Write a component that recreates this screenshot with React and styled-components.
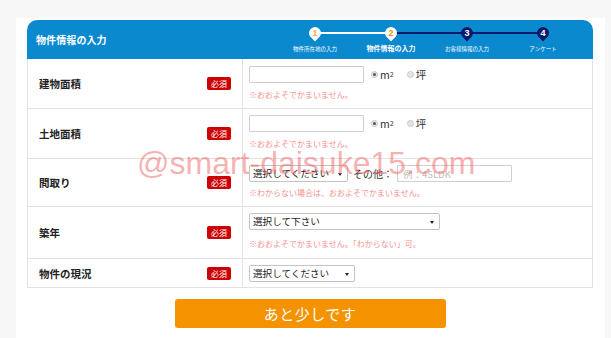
import React from "react";
import styled, { createGlobalStyle } from "styled-components";

const Global = createGlobalStyle`
  html, body { margin: 0; padding: 0; background: #f7f7f7; }
  body { font-family: "Noto Sans CJK JP", "Noto Sans", sans-serif; color: #222; }
  * { box-sizing: border-box; }
`;

const Page = styled.div`
  position: relative;
  width: 611px;
  height: 338px;
  padding: 18px 0 0 16px;
  overflow: hidden;
`;

const Panel = styled.div`
  width: 589px;
  background: #fff;
  padding: 2px 12px 10px 11px;
`;

const Header = styled.div`
  height: 39px;
  background: #0a89cf;
  border-radius: 10px 10px 0 0;
  display: flex;
  align-items: stretch;
  padding-left: 9px;
`;

const Title = styled.div`
  display: flex;
  align-items: center;
  color: #fff;
  font-weight: 700;
  font-size: 10px;
  letter-spacing: 0.1px;
`;

const Steps = styled.div`
  margin-left: auto;
  margin-right: 12px;
  display: grid;
  grid-template-columns: repeat(4, 76px);
  padding-top: 4px;
`;

const Step = styled.div`
  display: flex;
  flex-direction: column;
  align-items: center;
`;

const StepLabel = styled.div`
  color: #fff;
  font-size: ${(p) => (p.$active ? "7px" : "5.5px")};
  font-weight: ${(p) => (p.$active ? 700 : 400)};
  line-height: 9px;
  margin-top: ${(p) => (p.$active ? "0px" : "1px")};
  white-space: nowrap;
`;

const NAVY = "#0b1a6b";

function Marker({ n, left, right, done }) {
  const fill = done ? "#fff" : NAVY;
  const text = done ? (n === 1 ? "#f7a55a" : "#f39000") : "#fff";
  return (
    <svg width="76" height="20" viewBox="0 0 76 20">
      {left && <line x1="0" y1="9" x2="38" y2="9" stroke={left} strokeWidth="2" />}
      {right && <line x1="38" y1="9" x2="76" y2="9" stroke={right} strokeWidth="2" />}
      <path d="M38 17.5 L34.2 13.4 A5.8 5.8 0 1 1 41.8 13.4 Z" fill={fill} />
      <circle cx="38" cy="9" r="5.8" fill={fill} />
      <text
        x="38"
        y="12.3"
        textAnchor="middle"
        fontSize="9"
        fontWeight="700"
        fontFamily="Liberation Sans, Arial, sans-serif"
        fill={text}
      >
        {n}
      </text>
    </svg>
  );
}

const Table = styled.div`
  border: 1px solid #e2e2e2;
  border-top: none;
`;

const Row = styled.div`
  display: grid;
  grid-template-columns: 215px 1fr;
  border-bottom: 1px solid #e2e2e2;
  &:last-child { border-bottom: none; }
`;

const LabelCell = styled.div`
  display: flex;
  align-items: center;
  padding: 0 11px;
  border-right: 1px solid #e2e2e2;
`;

const Label = styled.div`
  flex: 1;
  font-size: 10.5px;
  font-weight: 700;
  color: #222;
`;

const Badge = styled.span`
  background: #cc0000;
  color: #fff;
  font-size: 8px;
  line-height: 13px;
  height: 13px;
  padding: 0 4px;
  border-radius: 2px;
`;

const FieldCell = styled.div`
  padding: ${(p) => p.$pad || "6px 6px 7px"};
  display: flex;
  flex-direction: column;
`;

const Line = styled.div`
  display: flex;
  align-items: center;
  height: 17px;
  white-space: nowrap;
  & > * { flex-shrink: 0; }
`;

const TextInput = styled.input`
  width: ${(p) => p.$w}px;
  height: 17px;
  border: 1px solid #cfcfcf;
  border-radius: 1px;
  padding: 0 5px;
  margin: 0;
  font-size: 9.5px;
  font-family: "Noto Sans CJK JP", sans-serif;
  color: #333;
  outline: none;
  &::placeholder { color: #bdbdbd; }
`;

const RadioLabel = styled.label`
  display: flex;
  align-items: center;
  font-size: 10.5px;
  color: #333;
  margin-left: ${(p) => p.$ml}px;
  sup { font-size: 7px; line-height: 0; position: relative; top: -1px; }
`;

const RadioDot = styled.span`
  width: 7px;
  height: 7px;
  border-radius: 50%;
  background: #e6e6e6;
  border: 1px solid #c8c8c8;
  margin-right: 2px;
  display: inline-flex;
  align-items: center;
  justify-content: center;
  &::after {
    content: "";
    width: 3px;
    height: 3px;
    border-radius: 50%;
    background: ${(p) => (p.$on ? "#555" : "transparent")};
  }
`;

const SelectBox = styled.div`
  position: relative;
  width: ${(p) => p.$w}px;
  height: 17px;
  border: 1px solid #c4c4c4;
  border-radius: 2px;
  background: #fff;
  font-size: 9.6px;
  color: #222;
  line-height: 15px;
  padding-left: 3px;
  overflow: hidden;
  &::after {
    content: "";
    position: absolute;
    right: 5px;
    top: 7px;
    border-left: 2px solid transparent;
    border-right: 2px solid transparent;
    border-top: 3px solid #222;
  }
`;

const Other = styled.span`
  font-size: 10px;
  color: #333;
  margin: 0 4px 0 5px;
`;

const Hint = styled.div`
  margin-top: ${(p) => p.$mt || 5}px;
  font-size: 8px;
  line-height: 13px;
  color: #f78f8f;
`;

const ButtonWrap = styled.div`
  display: flex;
  justify-content: center;
  padding-top: 11px;
`;

const Button = styled.button`
  width: 271px;
  height: 29px;
  background: #f59200;
  border: none;
  border-radius: 3px;
  color: #fff;
  font-size: 15px;
  font-family: "Noto Sans CJK JP", sans-serif;
  letter-spacing: 0.5px;
`;

const Watermark = styled.div`
  position: absolute;
  left: 137px;
  top: 145px;
  font-family: "Liberation Sans", Arial, sans-serif;
  font-size: 32px;
  color: rgba(240, 100, 100, 0.5);
  pointer-events: none;
  white-space: nowrap;
`;

const steps = [
  { n: 1, label: "物件所在地の入力", done: true, right: "#fff" },
  { n: 2, label: "物件情報の入力", done: true, active: true, left: "#fff", right: NAVY },
  { n: 3, label: "お客様情報の入力", left: NAVY, right: NAVY },
  { n: 4, label: "アンケート", left: NAVY },
];

function Unit() {
  return (
    <>
      <RadioLabel $ml={7}>
        <RadioDot $on />m<sup>2</sup>
      </RadioLabel>
      <RadioLabel $ml={13}>
        <RadioDot />坪
      </RadioLabel>
    </>
  );
}

export default function App() {
  return (
    <Page>
      <Global />
      <Panel>
        <Header>
          <Title>物件情報の入力</Title>
          <Steps>
            {steps.map((s) => (
              <Step key={s.n}>
                <Marker n={s.n} left={s.left} right={s.right} done={s.done} />
                <StepLabel $active={s.active}>{s.label}</StepLabel>
              </Step>
            ))}
          </Steps>
        </Header>
        <Table>
          <Row>
            <LabelCell>
              <Label>建物面積</Label>
              <Badge>必須</Badge>
            </LabelCell>
            <FieldCell $pad="7px 6px 7px">
              <Line>
                <TextInput $w={115} />
                <Unit />
              </Line>
              <Hint>※おおよそでかまいません。</Hint>
            </FieldCell>
          </Row>
          <Row>
            <LabelCell>
              <Label>土地面積</Label>
              <Badge>必須</Badge>
            </LabelCell>
            <FieldCell $pad="6px 6px 8px">
              <Line>
                <TextInput $w={115} />
                <Unit />
              </Line>
              <Hint>※おおよそでかまいません。</Hint>
            </FieldCell>
          </Row>
          <Row>
            <LabelCell>
              <Label>間取り</Label>
              <Badge>必須</Badge>
            </LabelCell>
            <FieldCell $pad="6px 6px 7px">
              <Line>
                <SelectBox $w={99}>選択してください</SelectBox>
                <Other>その他：</Other>
                <TextInput $w={115} placeholder="例：4SLDK" />
              </Line>
              <Hint $mt={4}>※わからない場合は、おおよそでかまいません。</Hint>
            </FieldCell>
          </Row>
          <Row>
            <LabelCell>
              <Label>築年</Label>
              <Badge>必須</Badge>
            </LabelCell>
            <FieldCell $pad="6px 6px 8px">
              <Line>
                <SelectBox $w={191}>選択して下さい</SelectBox>
              </Line>
              <Hint $mt={7}>※おおよそでかまいません。「わからない」可。</Hint>
            </FieldCell>
          </Row>
          <Row>
            <LabelCell>
              <Label>物件の現況</Label>
              <Badge>必須</Badge>
            </LabelCell>
            <FieldCell $pad="6px 6px 5px">
              <Line>
                <SelectBox $w={106}>選択してください</SelectBox>
              </Line>
            </FieldCell>
          </Row>
        </Table>
        <ButtonWrap>
          <Button>あと少しです</Button>
        </ButtonWrap>
      </Panel>
      <Watermark>@smart-daisuke15.com</Watermark>
    </Page>
  );
}
